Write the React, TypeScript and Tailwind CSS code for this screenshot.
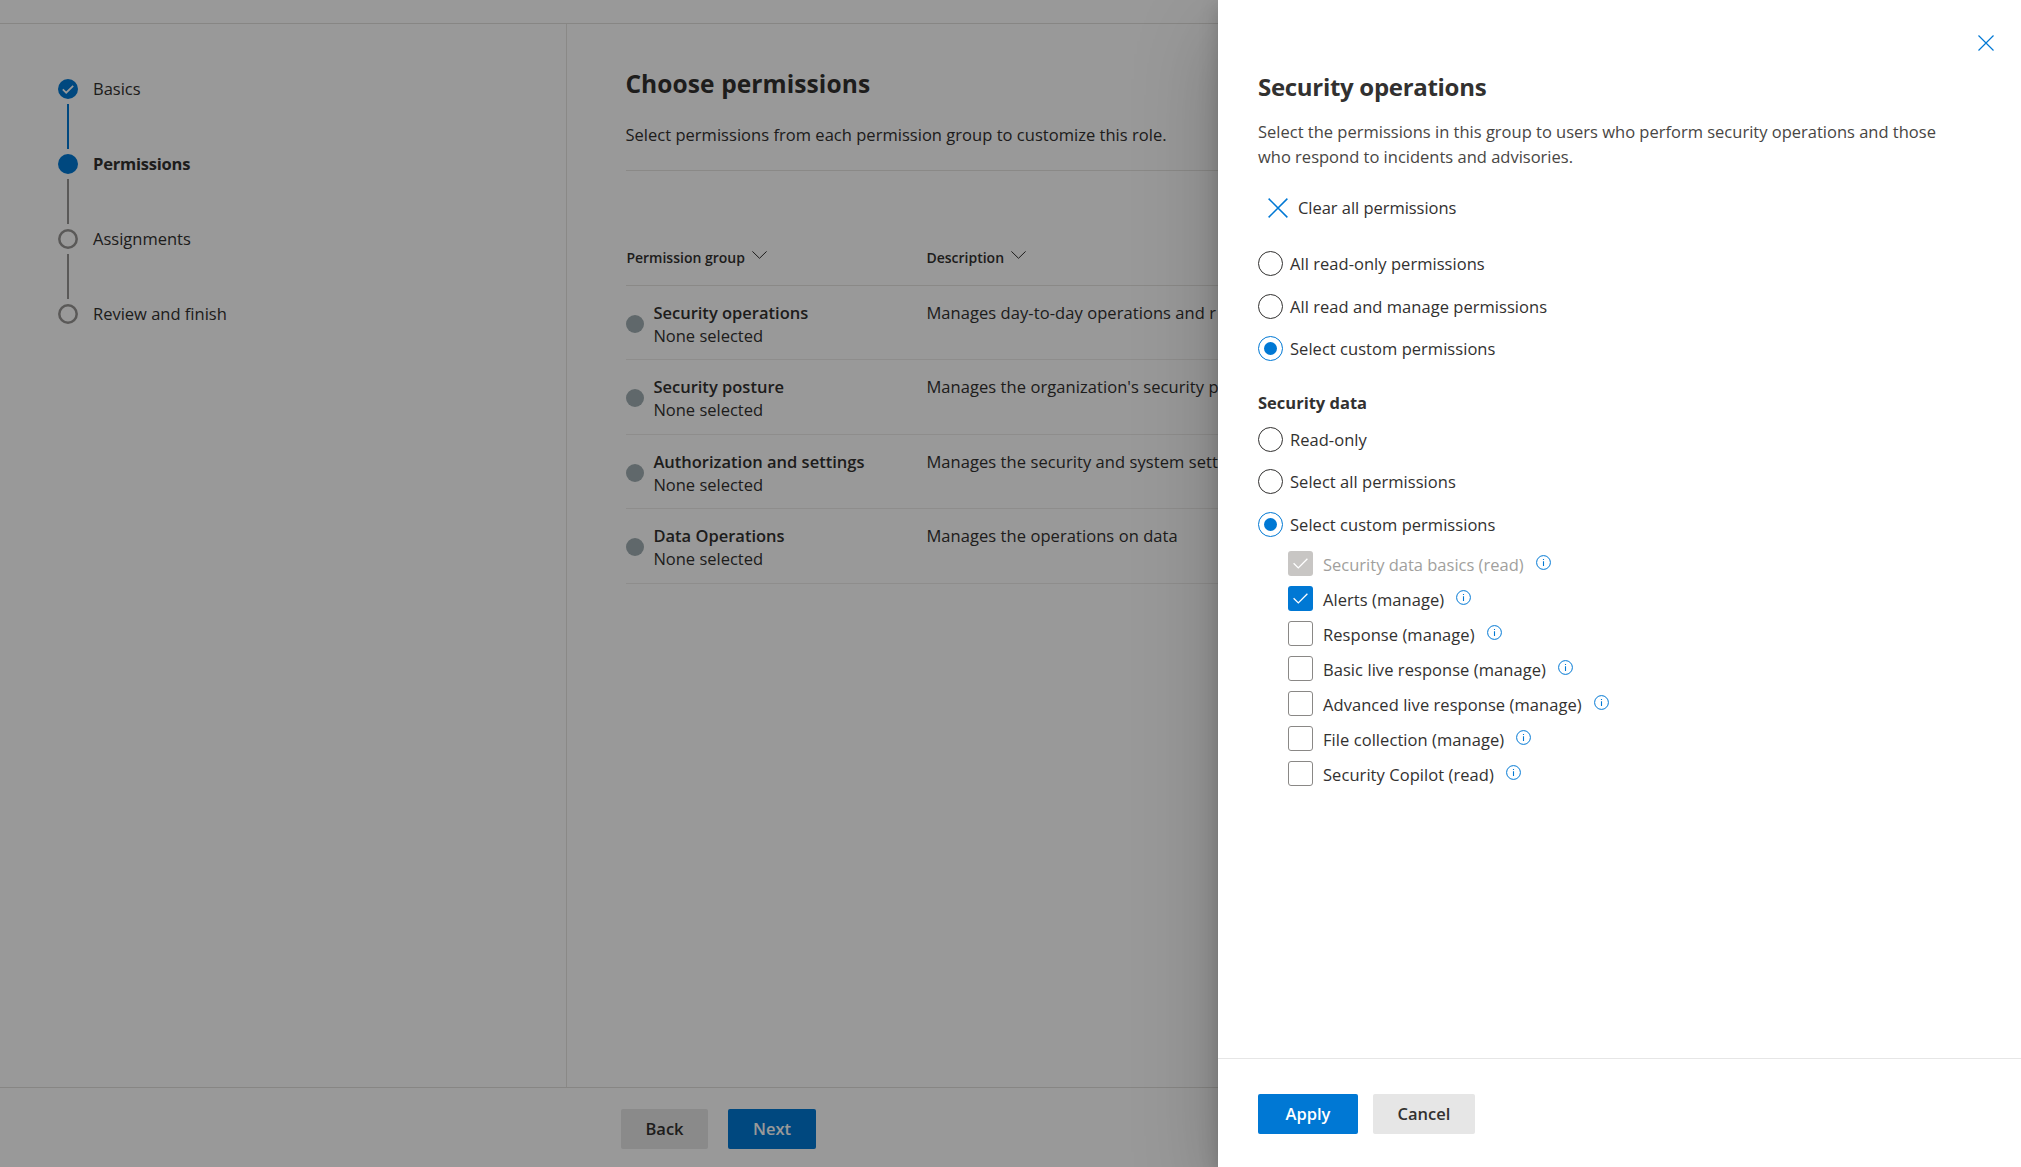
import type { FC, ReactNode } from "react";

type StepProps = {
    label: string;
    state: "done" | "current" | "todo";
    last?: boolean;
}

const Step: FC<StepProps> = ({ label, state, last }) => {
    return (
        <li className="flex h-[75px] gap-[15px]">
            <div className="flex flex-col items-center">
                {state === "todo" ? (
                    <svg viewBox="0 0 20 20" className="size-5" fill="none" stroke="#979593" strokeWidth="2.5">
                        <circle cx="10" cy="10" r="8.7" />
                    </svg>
                ) : (
                    <span className="flex size-5 items-center justify-center rounded-full bg-[#0078d4]">
                        {state === "done" && (
                            <svg viewBox="0 0 12 9" className="h-[9px] w-3" fill="none" stroke="#fff" strokeWidth="1.7">
                                <path d="M0.8 4.3 L4.2 7.7 L11.2 0.8" />
                            </svg>
                        )}
                    </span>
                )}
                {!last && <span className={`mt-[5px] h-[45px] w-0.5 ${state === "done" ? "bg-[#0078d4]" : "bg-[#979593]"}`} />}
            </div>
            <span className={`h-5 leading-[19px] ${state === "current" ? "font-bold tracking-[-0.22px]" : ""}`}>{label}</span>
        </li>
    )
}

const Chevron = () => (
    <svg viewBox="0 0 15 8" className="mb-1 h-2 w-[15px]" fill="none" stroke="#323130" strokeWidth="1">
        <path d="M0.4 0.4 L7.5 7.3 L14.6 0.4" />
    </svg>
)

const Cross: FC<{ className: string }> = ({ className }) => (
    <svg viewBox="0 0 16 16" className={className} fill="none" stroke="#0078d4" strokeWidth="1.2">
        <path d="M0.5 0.5 L15.5 15.5 M15.5 0.5 L0.5 15.5" />
    </svg>
)

const InfoIcon = () => (
    <svg viewBox="0 0 15 15" className="size-[15px] shrink-0" fill="none" stroke="#0078d4">
        <circle cx="7.5" cy="7.5" r="6.9" strokeWidth="1" />
        <path d="M7.5 6.2 V11 M7.5 4 V5.1" strokeWidth="1.1" />
    </svg>
)

type RadioProps = {
    children: ReactNode;
    checked?: boolean;
    className?: string;
}

const Radio: FC<RadioProps> = ({ children, checked, className }) => {
    return (
        <label className={`flex h-[25px] items-center gap-[7px] ${className ?? ""}`}>
            <span className={`flex size-[25px] items-center justify-center rounded-full border ${checked ? "border-[#0078d4]" : "border-[#323130]"}`}>
                {checked && <span className="size-[13px] rounded-full bg-[#0078d4]" />}
            </span>
            <span className="leading-[23px] tracking-[0.04px]">{children}</span>
        </label>
    )
}

type CheckProps = {
    label: string;
    checked?: boolean;
    disabled?: boolean;
}

const Check: FC<CheckProps> = ({ label, checked, disabled }) => {
    let box = "border border-[#8a8886] bg-white"
    if (checked) box = disabled ? "bg-[#c8c6c4]" : "bg-[#0078d4]"
    return (
        <div className="flex h-[25px] items-center">
            <span className={`flex size-[25px] items-center justify-center rounded-[3px] ${box}`}>
                {checked && (
                    <svg viewBox="0 0 15 11" className="h-[11px] w-[15px]" fill="none" stroke="#fff" strokeWidth="1.3">
                        <path d="M0.6 5.2 L5.3 9.9 L14.4 0.7" />
                    </svg>
                )}
            </span>
            <span className={`mt-[3px] ml-2.5 mr-3 leading-6 ${disabled ? "text-[#a19f9d]" : "tracking-[0.06px]"}`}>{label}</span>
            <span className="-mt-[3px]"><InfoIcon /></span>
        </div>
    )
}

const groups = [
    { name: "Security operations", text: "Manages day-to-day operations and r" },
    { name: "Security posture", text: "Manages the organization's security p" },
    { name: "Authorization and settings", text: "Manages the security and system setti" },
    { name: "Data Operations", text: "Manages the operations on data" },
]

const checks: CheckProps[] = [
    { label: "Security data basics (read)", checked: true, disabled: true },
    { label: "Alerts (manage)", checked: true },
    { label: "Response (manage)" },
    { label: "Basic live response (manage)" },
    { label: "Advanced live response (manage)" },
    { label: "File collection (manage)" },
    { label: "Security Copilot (read)" },
]

const Wizard = () => (
    <div className="flex h-full flex-col">
        <div className="h-6 border-b border-[#e1dfdd]" />
        <div className="flex flex-1">
            <ul className="w-[567px] border-r border-[#e6e4e2] pt-[55px] pl-[58px]">
                <Step label="Basics" state="done" />
                <Step label="Permissions" state="current" />
                <Step label="Assignments" state="todo" />
                <Step label="Review and finish" state="todo" last />
            </ul>
            <div className="flex-1 pt-11 pl-[59.4px]">
                <h1 className="-ml-px text-[24.5px] leading-8 font-bold tracking-[0.1px]">Choose permissions</h1>
                <p className="-ml-px mt-[23px] leading-[23px] tracking-[0.03px]">Select permissions from each permission group to customize this role.</p>
                <div className="mt-6 border-b border-[#e6e4e2]" />
                <div className="mt-[59px] flex h-[56px] items-center border-b border-[#e6e4e2] pb-px text-[14px] font-semibold">
                    <div className="flex w-[300px] items-center gap-[7px]">Permission group <Chevron /></div>
                    <div className="flex items-center gap-[7px]">Description <Chevron /></div>
                </div>
                {groups.map((g) => (
                    <div key={g.name} className="flex h-[74.4px] border-b border-[#edebe9] whitespace-nowrap">
                        <span className="mt-[29px] mr-[9px] size-[18px] rounded-full bg-[#a0aeb2]" />
                        <div className="w-[273px] pt-[15px] leading-[23px]">
                            <div className="font-semibold">{g.name}</div>
                            <div>None selected</div>
                        </div>
                        <div className="pt-[15px] leading-[23px] tracking-[0.07px]">{g.text}</div>
                    </div>
                ))}
            </div>
        </div>
        <div className="flex h-20 gap-5 border-t border-[#e1dfdd] pt-[21px] pl-[621px] font-semibold">
            <button className="h-10 w-[87px] rounded-[2px] bg-[#e6e6e6]">Back</button>
            <button className="h-10 w-[88px] rounded-[2px] bg-[#0078d4] text-white">Next</button>
        </div>
    </div>
)

const Panel = () => (
    <div className="absolute inset-y-0 right-0 flex w-[803px] flex-col bg-white shadow-[0_32px_80px_rgba(0,0,0,0.22),0_6px_18px_rgba(0,0,0,0.18)]">
        <div className="flex h-[71px] justify-end pt-[35px] pr-[27px]">
            <Cross className="size-4" />
        </div>
        <div className="flex-1 px-10">
            <h2 className="text-[24px] leading-8 font-bold tracking-[-0.3px]">Security operations</h2>
            <p className="mt-4 w-[700px] leading-[25px] text-[#484644]">
                Select the permissions in this group to users who perform security operations and those who respond to incidents and advisories.
            </p>
            <button className="mt-[27px] ml-[10px] flex h-6 items-center gap-[10px] tracking-[-0.04px]">
                <Cross className="size-5" />
                Clear all permissions
            </button>
            <Radio className="mt-[31px]">All read-only permissions</Radio>
            <Radio className="mt-[18px]">All read and manage permissions</Radio>
            <Radio className="mt-[17px]" checked>Select custom permissions</Radio>
            <h3 className="mt-[30px] leading-6 font-bold">Security data</h3>
            <Radio className="mt-3">Read-only</Radio>
            <Radio className="mt-[17px]">Select all permissions</Radio>
            <Radio className="mt-[18px]" checked>Select custom permissions</Radio>
            <div className="mt-[14px] ml-[30px] flex flex-col gap-2.5">
                {checks.map((c) => <Check key={c.label} {...c} />)}
            </div>
        </div>
        <div className="flex h-[109px] gap-[15px] border-t border-[#e6e6e6] pt-[35px] pl-10 font-semibold">
            <button className="h-10 w-[100px] rounded-[2px] bg-[#0078d4] text-white">Apply</button>
            <button className="h-10 w-[102px] rounded-[2px] bg-[#e6e6e6]">Cancel</button>
        </div>
    </div>
)

export default function App() {
    return (
        <div className="relative h-[1167px] w-[2021px] overflow-hidden bg-white font-['Open_Sans',sans-serif] text-[16.5px] text-[#323130]">
            <Wizard />
            <div className="absolute inset-0 bg-black/40" />
            <Panel />
        </div>
    )
}
